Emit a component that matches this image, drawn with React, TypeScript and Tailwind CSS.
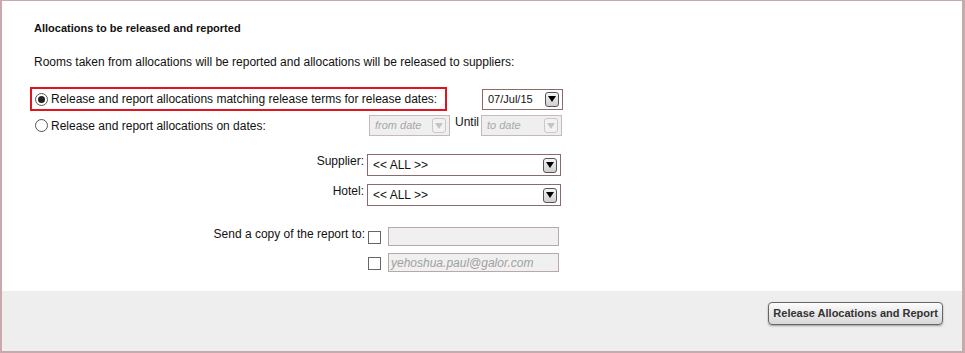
import React from "react";

const font = "font-['Liberation_Sans',Arial,sans-serif]";

function Arrow({ disabled }: { disabled?: boolean }) {
  return (
    <span
      className={`flex h-[15px] w-[14px] items-center justify-center rounded-[3px] border ${
        disabled
          ? "border-[#c8c8c8] bg-[#f2f2f2]"
          : "border-[#555] bg-gradient-to-b from-[#f4f4f4] to-[#d0d0d0]"
      }`}
    >
      <svg width="8" height="6" viewBox="0 0 8 6">
        <path d="M0 0h8L4 6z" fill={disabled ? "#c4c4c4" : "#000"} />
      </svg>
    </span>
  );
}

function Select({
  value,
  width,
  disabled,
  height = 21,
  small,
}: {
  value: string;
  width: number;
  disabled?: boolean;
  height?: number;
  small?: boolean;
}) {
  return (
    <div
      style={{ width, height }}
      className={`flex items-center justify-between border pl-[5px] pr-[3px] ${small ? "text-[11px]" : "text-[12px]"} ${
        disabled
          ? "border-[#c9b8b8] bg-[#efefef] italic text-[#a8a8a8]"
          : "border-[#8c6a6a] bg-white text-[#111]"
      }`}
    >
      <span>{value}</span>
      <Arrow disabled={disabled} />
    </div>
  );
}

function Radio({ checked }: { checked?: boolean }) {
  return (
    <span className="flex h-[13px] w-[13px] items-center justify-center rounded-full border border-[#555] bg-white">
      {checked && <span className="h-[7px] w-[7px] rounded-full bg-[#222]" />}
    </span>
  );
}

function Check() {
  return <span className="block h-[13px] w-[13px] border border-[#666] bg-white" />;
}

export default function App() {
  return (
    <div className={`${font} flex h-[353px] w-[965px] flex-col border-2 border-t border-r-[3px] border-[#c9a9ac] bg-white text-[#111]`}>
      <div className="flex-1 pl-[32px] pt-[20px]">
        <h2 className="text-[11px] font-bold leading-[14px]">
          Allocations to be released and reported
        </h2>
        <p className="mt-[20px] text-[12px] leading-[15px]">
          Rooms taken from allocations will be reported and allocations will be released to suppliers:
        </p>

        <div className="mt-[17px] flex items-center">
          <div className="-ml-[4px] flex h-[24px] w-[417px] items-center gap-[3px] border-2 border-[#e0141e] pl-[3px] text-[12px]">
            <Radio checked />
            <span>Release and report allocations matching release terms for release dates:</span>
          </div>
          <div className="ml-[35px]">
            <Select value="07/Jul/15" width={81} small />
          </div>
        </div>

        <div className="mt-[4px] flex items-center">
          <div className="flex w-[335px] items-center gap-[3px] pl-[1px] text-[12px]">
            <Radio />
            <span>Release and report allocations on dates:</span>
          </div>
          <Select value="from date" width={81} disabled small />
          <span className="w-[31px] self-start pl-[5px] text-[12px] leading-[14px]">Until</span>
          <Select value="to date" width={81} disabled small />
        </div>

        <div className="mt-[18px] flex items-start">
          <span className="w-[333px] pr-[3px] text-right text-[12px] leading-[15px]">Supplier:</span>
          <Select value="<< ALL >>" width={194} height={22} />
        </div>
        <div className="mt-[8px] flex items-start">
          <span className="w-[333px] pr-[3px] text-right text-[12px] leading-[15px]">Hotel:</span>
          <Select value="<< ALL >>" width={194} height={22} />
        </div>

        <div className="mt-[21px] flex items-start">
          <span className="w-[334px] pr-[3px] text-right text-[12px] leading-[15px]">
            Send a copy of the report to:
          </span>
          <div className="flex flex-col gap-[7px]">
            <div className="flex items-center gap-[7px]">
              <span className="mt-[2px]"><Check /></span>
              <div className="h-[19px] w-[171px] border border-[#b8a8a8] bg-[#f0f0f0]" />
            </div>
            <div className="flex items-center gap-[7px]">
              <span className="mt-[2px]"><Check /></span>
              <div className="flex h-[19px] w-[171px] items-center border border-[#b8a8a8] bg-[#f0f0f0] pl-[2px] text-[12px] italic text-[#a0a0a0]">
                yehoshua.paul@galor.com
              </div>
            </div>
          </div>
        </div>
      </div>

      <div className="flex h-[60px] items-start justify-end bg-[#eeeeee] pr-[19px] pt-[11px]">
        <button className="h-[23px] rounded-[4px] border border-[#666] bg-gradient-to-b from-[#fcfcfc] to-[#d8d8d8] px-[4px] text-[11px] font-bold text-[#333] shadow-[0_1px_2px_rgba(0,0,0,0.35)]">
          Release Allocations and Report
        </button>
      </div>
    </div>
  );
}
